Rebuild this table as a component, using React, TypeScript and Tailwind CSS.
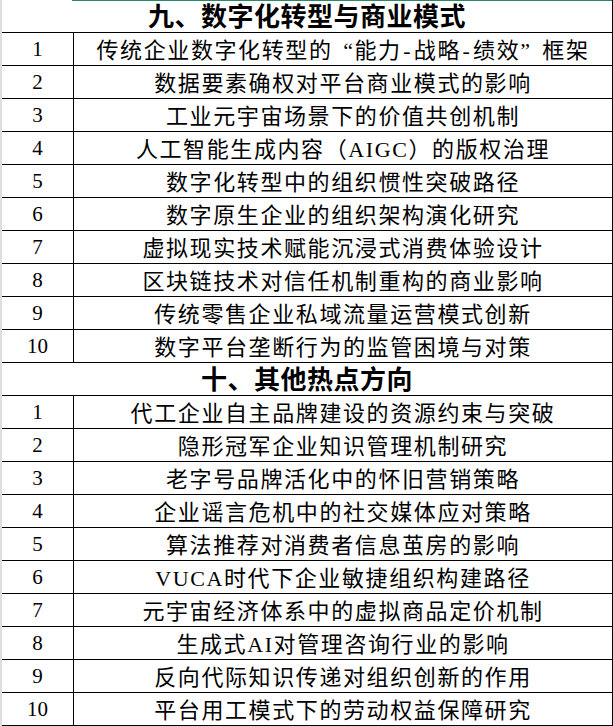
const sections = [
  {
    title: "九、数字化转型与商业模式",
    items: [
      "传统企业数字化转型的“能力-战略-绩效”框架",
      "数据要素确权对平台商业模式的影响",
      "工业元宇宙场景下的价值共创机制",
      "人工智能生成内容（AIGC）的版权治理",
      "数字化转型中的组织惯性突破路径",
      "数字原生企业的组织架构演化研究",
      "虚拟现实技术赋能沉浸式消费体验设计",
      "区块链技术对信任机制重构的商业影响",
      "传统零售企业私域流量运营模式创新",
      "数字平台垄断行为的监管困境与对策",
    ],
  },
  {
    title: "十、其他热点方向",
    items: [
      "代工企业自主品牌建设的资源约束与突破",
      "隐形冠军企业知识管理机制研究",
      "老字号品牌活化中的怀旧营销策略",
      "企业谣言危机中的社交媒体应对策略",
      "算法推荐对消费者信息茧房的影响",
      "VUCA时代下企业敏捷组织构建路径",
      "元宇宙经济体系中的虚拟商品定价机制",
      "生成式AI对管理咨询行业的影响",
      "反向代际知识传递对组织创新的作用",
      "平台用工模式下的劳动权益保障研究",
    ],
  },
];

const cjk = { fontFamily: '"Liberation Serif", "Noto Sans CJK SC", serif' };

// full-width curly quotes like the sheet's song font
function Cell({ text }: { text: string }) {
  const parts = text.split(/([“”-])/);
  return (
    <>
      {parts.map((p, i) =>
        p === "“" ? (
          <span key={i} className="inline-block w-[1em] text-right">“</span>
        ) : p === "”" ? (
          <span key={i} className="inline-block w-[1em] text-left">”</span>
        ) : p === "-" ? (
          <span key={i} className="inline-block w-[0.55em] text-center">-</span>
        ) : (
          <span key={i}>{p}</span>
        )
      )}
    </>
  );
}

export default function App() {
  return (
    <div className="relative flex w-[613px] bg-white text-black" style={cjk}>
      {/* selected-cell border from the sheet */}
      <div className="absolute left-[72px] top-0 h-px w-[540px] bg-[#2a8a68]" />
      <div className="w-[2px] shrink-0 bg-[#dedede]" />
      <div className="flex w-[611px] flex-col border-r border-black">
        {sections.map((s) => (
          <div key={s.title} className="flex flex-col">
            <div className="flex h-[33px] items-center justify-center border-b border-black pt-[2px] text-[26px] font-bold tracking-[0.5px]">
              {s.title}
            </div>
            {s.items.map((it, i) => (
              <div key={it} className="flex h-[33px] border-b border-black">
                <div className="flex w-[72px] shrink-0 items-center justify-center border-r border-black pt-[2px] text-[21px]">
                  {i + 1}
                </div>
                <div className="flex flex-1 items-center justify-center whitespace-nowrap pt-[2px] text-[22px] tracking-[1.6px]">
                  <Cell text={it} />
                </div>
              </div>
            ))}
          </div>
        ))}
      </div>
    </div>
  );
}
